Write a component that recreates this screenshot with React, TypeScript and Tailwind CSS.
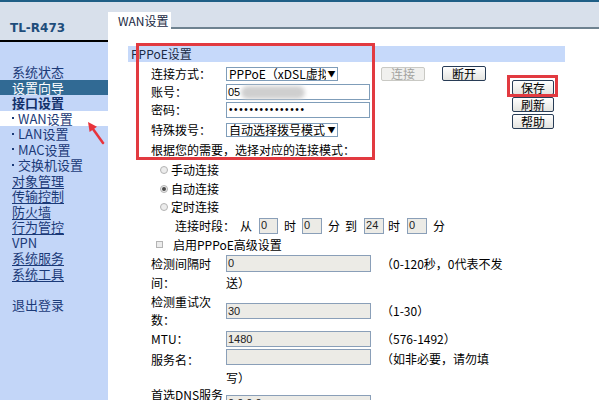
import React from "react";

const CJK = { fontFamily: "'Noto Sans CJK SC', 'Liberation Sans', sans-serif" };

function Input({ w, h = 16, value, className = "" }: { w: number; h?: number; value?: string; className?: string }) {
  return (
    <div
      className={`shrink-0 flex items-center bg-[#ecebe6] border border-[#8a9fb8] pl-[1px] text-[11px] text-[#222] overflow-hidden ${className}`}
      style={{ width: w, height: h, fontFamily: "'Liberation Sans', sans-serif" }}
    >
      {value}
    </div>
  );
}

function Select({ text }: { text: string }) {
  return (
    <div className="shrink-0 w-[112px] h-[14px] border border-[#7f9db9] bg-white flex items-center overflow-hidden">
      <span className="flex-1 overflow-hidden whitespace-nowrap text-[12px] leading-[12px] pl-[2px] text-black">{text}</span>
      <span className="w-[11px] text-[8px] leading-none text-black text-center">▼</span>
    </div>
  );
}

function Btn({ children, disabled = false, className = "" }: { children: React.ReactNode; disabled?: boolean; className?: string }) {
  return (
    <div
      className={`shrink-0 flex items-center justify-center rounded-[2px] text-[12px] leading-none ${
        disabled
          ? "bg-[#f0f0ee] border border-[#c9c9c4] text-[#a3a3a0]"
          : "bg-gradient-to-b from-white to-[#e4e4e0] border border-[#283c56] text-black"
      } ${className}`}
    >
      {children}
    </div>
  );
}

function Radio({ checked = false }: { checked?: boolean }) {
  return (
    <div className="shrink-0 w-[8px] h-[8px] rounded-full border border-[#b4b4b4] bg-[#ececec] flex items-center justify-center">
      {checked && <div className="w-[4px] h-[4px] rounded-full bg-[#4a4a4a]" />}
    </div>
  );
}

const menu: { t: string; kind?: string; sub?: boolean }[] = [
  { t: "系统状态" },
  { t: "设置向导", kind: "active" },
  { t: "接口设置", kind: "bold" },
  { t: "WAN设置", kind: "white", sub: true },
  { t: "LAN设置", sub: true },
  { t: "MAC设置", sub: true },
  { t: "交换机设置", sub: true },
  { t: "对象管理", kind: "u" },
  { t: "传输控制", kind: "u" },
  { t: "防火墙", kind: "u" },
  { t: "行为管控", kind: "u" },
  { t: "VPN" },
  { t: "系统服务", kind: "u" },
  { t: "系统工具", kind: "u" },
  { t: "" },
  { t: "退出登录" },
];

export default function App() {
  return (
    <div className="relative w-[599px] h-[400px] overflow-hidden bg-white text-black" style={CJK}>
      <div className="h-[2px] bg-[#1f5f86]" />
      <div className="flex h-[398px] overflow-hidden">
        {/* Sidebar */}
        <aside className="w-[108px] shrink-0 bg-[#c3d6f8]">
          <div className="h-[40px] bg-[#d8e0eb] border-b-2 border-black pl-[10px] pt-[16px] leading-[14px]">
            <span
              className="text-[12px] leading-[14px] font-bold text-[#1e4d7b]"
              style={{ fontFamily: "'DejaVu Sans', sans-serif" }}
            >
              TL-R473
            </span>
          </div>
          <nav className="pt-[22px] text-[13px] leading-[15.5px]">
            {menu.map((m, i) => (
              <div
                key={i}
                className={`h-[15.5px] pl-[12px] whitespace-nowrap flex items-center ${
                  m.kind === "active"
                    ? "bg-[#316a94] text-white"
                    : m.kind === "white"
                    ? "bg-white text-[#1b3a78]"
                    : m.kind === "bold"
                    ? "font-bold text-[#12306a]"
                    : "text-[#1b3a78]"
                }`}
              >
                {m.sub && (
                  <span className="w-[6px] h-[15.5px] flex items-center">
                    <span className="w-[2px] h-[2px] bg-[#1b3a78]" />
                  </span>
                )}
                <span className={m.kind === "u" ? "underline underline-offset-2" : ""}>{m.t}</span>
              </div>
            ))}
          </nav>
        </aside>

        {/* Main */}
        <main className="flex-1 min-w-0">
          <div className="h-[27px] bg-[#d8e0eb] flex items-end">
            <div className="w-[63px] h-[17px] bg-white pl-[10px] text-[12px] leading-[17px] text-[#1a2a44]">WAN设置</div>
            <div className="flex-1 border-b-2 border-[#6e8290]" />
          </div>

          <div className="pl-[20px] pt-[17px]">
            <div className="w-[437px] h-[16px] bg-[#c6d9fa] pl-[3px] text-[12px] leading-[16px] text-[#1a2a44]">PPPoE设置</div>

            <div className="flex">
              {/* Form */}
              <div className="w-[384px] shrink-0 pl-[23px] pt-[2px] text-[12px]">
                <div className="h-[19px] flex items-center">
                  <div className="w-[75px] shrink-0 leading-[19px]">连接方式：</div>
                  <Select text="PPPoE（xDSL虚拟拨号）" />
                  <Btn disabled className="ml-[43px] w-[44px] h-[14px]">连接</Btn>
                  <Btn className="ml-[17px] w-[44px] h-[15px]">断开</Btn>
                </div>
                <div className="h-[18px] flex items-center">
                  <div className="w-[75px] shrink-0 leading-[18px]">账号：</div>
                  <div className="w-[144px] h-[16px] border border-[#7f9db9] bg-white flex items-center pl-[1px] text-[11px]" style={{ fontFamily: "'Liberation Sans', sans-serif" }}>
                    <span>05</span>
                    <span className="ml-[1px] w-[64px] h-[13px] rounded-full bg-[#cfcfcf] blur-[2px]" />
                  </div>
                </div>
                <div className="h-[18px] flex items-center">
                  <div className="w-[75px] shrink-0 leading-[18px]">密码：</div>
                  <div className="w-[144px] h-[16px] border border-[#7f9db9] bg-white flex items-center pl-[2px] text-[10px] tracking-[1.6px] leading-none" style={{ fontFamily: "'Liberation Sans', sans-serif" }}>
                    •••••••••••••••
                  </div>
                </div>
                <div className="h-[21px] flex items-center">
                  <div className="w-[75px] shrink-0 leading-[21px]">特殊拨号：</div>
                  <Select text="自动选择拨号模式" />
                </div>
                <div className="h-[20px] leading-[20px] whitespace-nowrap">根据您的需要，选择对应的连接模式：</div>

                <div className="h-[19px] flex items-center pl-[9px]">
                  <Radio />
                  <span className="ml-[3px] leading-[19px]">手动连接</span>
                </div>
                <div className="h-[19px] flex items-center pl-[9px]">
                  <Radio checked />
                  <span className="ml-[3px] leading-[19px]">自动连接</span>
                </div>
                <div className="h-[18px] flex items-center pl-[9px]">
                  <Radio />
                  <span className="ml-[3px] leading-[18px]">定时连接</span>
                </div>
                <div className="h-[19px] flex items-center pl-[24px] whitespace-nowrap leading-[19px]">
                  <span>连接时段：</span>
                  <span className="ml-[5px]">从</span>
                  <Input w={19} value="0" className="ml-[7px]" />
                  <span className="ml-[6px]">时</span>
                  <Input w={20} value="0" className="ml-[6px]" />
                  <span className="ml-[6px]">分</span>
                  <span className="ml-[5px]">到</span>
                  <Input w={20} value="24" className="ml-[7px]" />
                  <span className="ml-[4px]">时</span>
                  <Input w={20} value="0" className="ml-[7px]" />
                  <span className="ml-[6px]">分</span>
                </div>
                <div className="h-[19px] flex items-center pl-[5px]">
                  <div className="shrink-0 w-[7px] h-[7px] border border-[#b4b4b4] bg-[#ececec]" />
                  <span className="ml-[10px] leading-[19px]">启用PPPoE高级设置</span>
                </div>

                {/* 检测间隔时间 */}
                <div className="flex h-[39px]">
                  <div className="w-[75px] shrink-0">
                    <div className="leading-[19px]">检测间隔时</div>
                    <div className="leading-[20px]">间：</div>
                  </div>
                  <div>
                    <div className="h-[19px] flex items-start whitespace-nowrap">
                      <Input w={145} h={17} value="0" className="mt-[1px]" />
                      <span className="ml-[10px] leading-[19px]">（0-120秒，0代表不发</span>
                    </div>
                    <div className="h-[20px] leading-[20px]">送）</div>
                  </div>
                </div>

                {/* 检测重试次数 */}
                <div className="flex items-center h-[36px]">
                  <div className="w-[75px] shrink-0">
                    <div className="leading-[18px]">检测重试次</div>
                    <div className="leading-[18px]">数：</div>
                  </div>
                  <Input w={145} value="30" />
                  <span className="ml-[10px] leading-[18px]">（1-30）</span>
                </div>

                <div className="flex items-center h-[20px]">
                  <div className="w-[75px] shrink-0 leading-[20px]">MTU：</div>
                  <Input w={145} value="1480" />
                  <span className="ml-[10px] leading-[20px]">（576-1492）</span>
                </div>

                {/* 服务名 */}
                <div className="flex h-[38px]">
                  <div className="w-[75px] shrink-0 pt-[3px] leading-[16px]">服务名：</div>
                  <div>
                    <div className="h-[19px] flex items-start whitespace-nowrap">
                      <Input w={145} />
                      <span className="ml-[10px] leading-[19px]">（如非必要，请勿填</span>
                    </div>
                    <div className="h-[19px] leading-[19px]">写）</div>
                  </div>
                </div>

                <div className="flex h-[30px]">
                  <div className="w-[75px] shrink-0 leading-[16px] whitespace-nowrap">首选DNS服务</div>
                  <Input w={145} value="0.0.0.0" className="mt-[8px]" />
                </div>
              </div>

              {/* Right buttons */}
              <div className="pt-[18px] flex flex-col gap-[2px]">
                <Btn className="w-[42px] h-[15px]">保存</Btn>
                <Btn className="w-[42px] h-[15px]">刷新</Btn>
                <Btn className="w-[42px] h-[15px]">帮助</Btn>
              </div>
            </div>
          </div>
        </main>
      </div>

      {/* Annotations */}
      <div className="absolute left-[136px] top-[43px] w-[239px] h-[117px] border-[3px] border-[#e23a40]" />
      <div className="absolute left-[507px] top-[75px] w-[51px] h-[22px] border-[3px] border-[#e23a40]" />
      <svg className="absolute left-[84px] top-[118px]" width="24" height="30" viewBox="0 0 24 30">
        <line x1="9" y1="11" x2="19" y2="25" stroke="#e8343c" strokeWidth="2.5" strokeLinecap="round" />
        <polygon points="4,4 13,8.7 5.6,14" fill="#e8343c" />
      </svg>
    </div>
  );
}
